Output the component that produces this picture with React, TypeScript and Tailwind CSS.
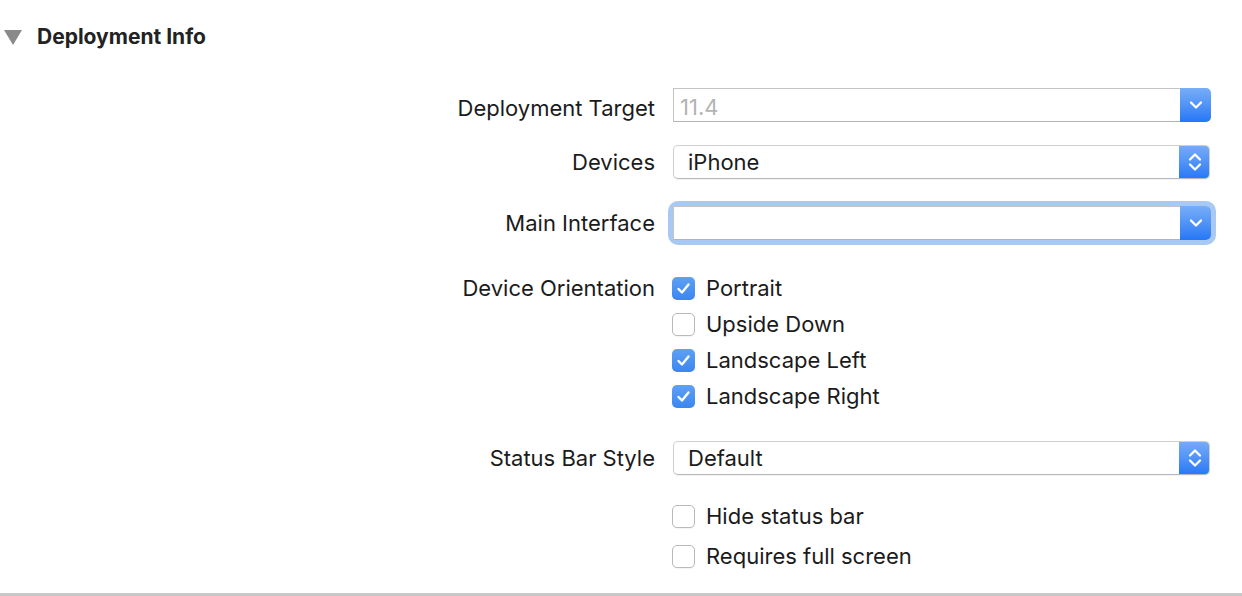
import React from "react";

const font = { fontFamily: "Inter, 'Liberation Sans', sans-serif" };

function Chevron({ double }: { double?: boolean }) {
  if (double) {
    return (
      <svg width="16" height="22" viewBox="0 0 16 22" fill="none" stroke="white" strokeWidth="2.3" strokeLinecap="round" strokeLinejoin="round">
        <path d="M3 8.5 L8 3.5 L13 8.5" />
        <path d="M3 13.5 L8 18.5 L13 13.5" />
      </svg>
    );
  }
  return (
    <svg width="16" height="10" viewBox="0 0 16 10" fill="none" stroke="white" strokeWidth="2.3" strokeLinecap="round" strokeLinejoin="round">
      <path d="M3 2.5 L8 7.5 L13 2.5" />
    </svg>
  );
}

function ComboBox({ value, disabled, focused }: { value: string; disabled?: boolean; focused?: boolean }) {
  return (
    <div
      className={`flex h-[34px] w-[538px] ${focused ? "rounded-[5px] shadow-[0_0_0_5px_#a8c9f4]" : ""}`}
    >
      <div className="flex flex-1 items-center border border-r-0 border-[#c4c4c4] border-b-[#b4b4b4] bg-white pl-[6px] pt-[5px] text-[22px]">
        <span className={disabled ? "text-[#b3b3b3]" : "text-[#1b1b1b]"}>{value}</span>
      </div>
      <div className="flex w-[31px] items-center justify-center rounded-r-[5px] bg-gradient-to-b from-[#78adf7] to-[#2477f6]">
        <Chevron />
      </div>
    </div>
  );
}

function PopUp({ value }: { value: string }) {
  return (
    <div className="flex h-[34px] w-[537px] overflow-hidden rounded-[5px] border border-[#cfcfcf] border-b-[#b8b8b8] bg-white shadow-[0_1px_1px_rgba(0,0,0,0.06)]">
      <div className="flex flex-1 items-center pl-[14px] text-[22px] text-[#1b1b1b]">{value}</div>
      <div className="-my-px -mr-px flex w-[31px] items-center justify-center bg-gradient-to-b from-[#78adf7] to-[#2477f6]">
        <Chevron double />
      </div>
    </div>
  );
}

function Check({ checked, label }: { checked?: boolean; label: string }) {
  return (
    <div className="flex items-center gap-[11px]">
      {checked ? (
        <div className="flex h-[23px] w-[23px] items-center justify-center rounded-[5px] bg-gradient-to-b from-[#5ea0f4] to-[#3b86f0]">
          <svg width="15" height="13" viewBox="0 0 15 13" fill="none" stroke="white" strokeWidth="2.4" strokeLinecap="round" strokeLinejoin="round">
            <path d="M2.5 7 L6 10.5 L12.5 2.5" />
          </svg>
        </div>
      ) : (
        <div className="h-[23px] w-[23px] rounded-[5px] border border-[#b9b9b9] bg-white shadow-[0_1px_1px_rgba(0,0,0,0.05)]" />
      )}
      <span className="text-[22px] text-[#1b1b1b]">{label}</span>
    </div>
  );
}

function Row({ label, children, className, labelClass }: { label?: string; children: React.ReactNode; className?: string; labelClass?: string }) {
  return (
    <div className={`flex items-center ${className ?? ""}`}>
      <div className={`w-[655px] shrink-0 text-right text-[22px] text-[#1b1b1b] ${labelClass ?? ""}`}>{label}</div>
      <div className="ml-[18px]">{children}</div>
    </div>
  );
}

export default function App() {
  return (
    <div className="relative h-[596px] w-[1242px] overflow-hidden bg-white" style={font}>
      {/* section header */}
      <div className="flex h-[22px] items-center mt-[26px]">
        <svg className="ml-[4px]" width="18" height="15" viewBox="0 0 18 15">
          <path d="M0 0 H18 L9 15 Z" fill="#8a8a8a" />
        </svg>
        <span className="ml-[15px] text-[21px] font-bold leading-[22px] text-[#222]">Deployment Info</span>
      </div>

      <div className="flex flex-col">
        <Row label="Deployment Target" className="mt-[40px] h-[34px]" labelClass="pt-[6px]">
          <ComboBox value="11.4" disabled />
        </Row>
        <Row label="Devices" className="mt-[23px] h-[34px]">
          <PopUp value="iPhone" />
        </Row>
        <Row label="Main Interface" className="mt-[27px] h-[34px]">
          <ComboBox value="" focused />
        </Row>

        <div className="mt-[30px] flex">
          <div className="w-[655px] shrink-0 text-right text-[22px] leading-[36px] text-[#1b1b1b]">Device Orientation</div>
          <div className="ml-[17px] flex flex-col">
            <div className="h-[36px] flex items-center"><Check checked label="Portrait" /></div>
            <div className="h-[36px] flex items-center"><Check label="Upside Down" /></div>
            <div className="h-[36px] flex items-center"><Check checked label="Landscape Left" /></div>
            <div className="h-[36px] flex items-center"><Check checked label="Landscape Right" /></div>
          </div>
        </div>

        <Row label="Status Bar Style" className="mt-[27px] h-[34px]">
          <PopUp value="Default" />
        </Row>

        <div className="ml-[672px] mt-[21px] flex flex-col">
          <div className="h-[40px] flex items-center"><Check label="Hide status bar" /></div>
          <div className="h-[40px] flex items-center"><Check label="Requires full screen" /></div>
        </div>
      </div>

      <div className="absolute bottom-0 left-0 h-[3px] w-full bg-[#c9c9c9]" />
    </div>
  );
}
